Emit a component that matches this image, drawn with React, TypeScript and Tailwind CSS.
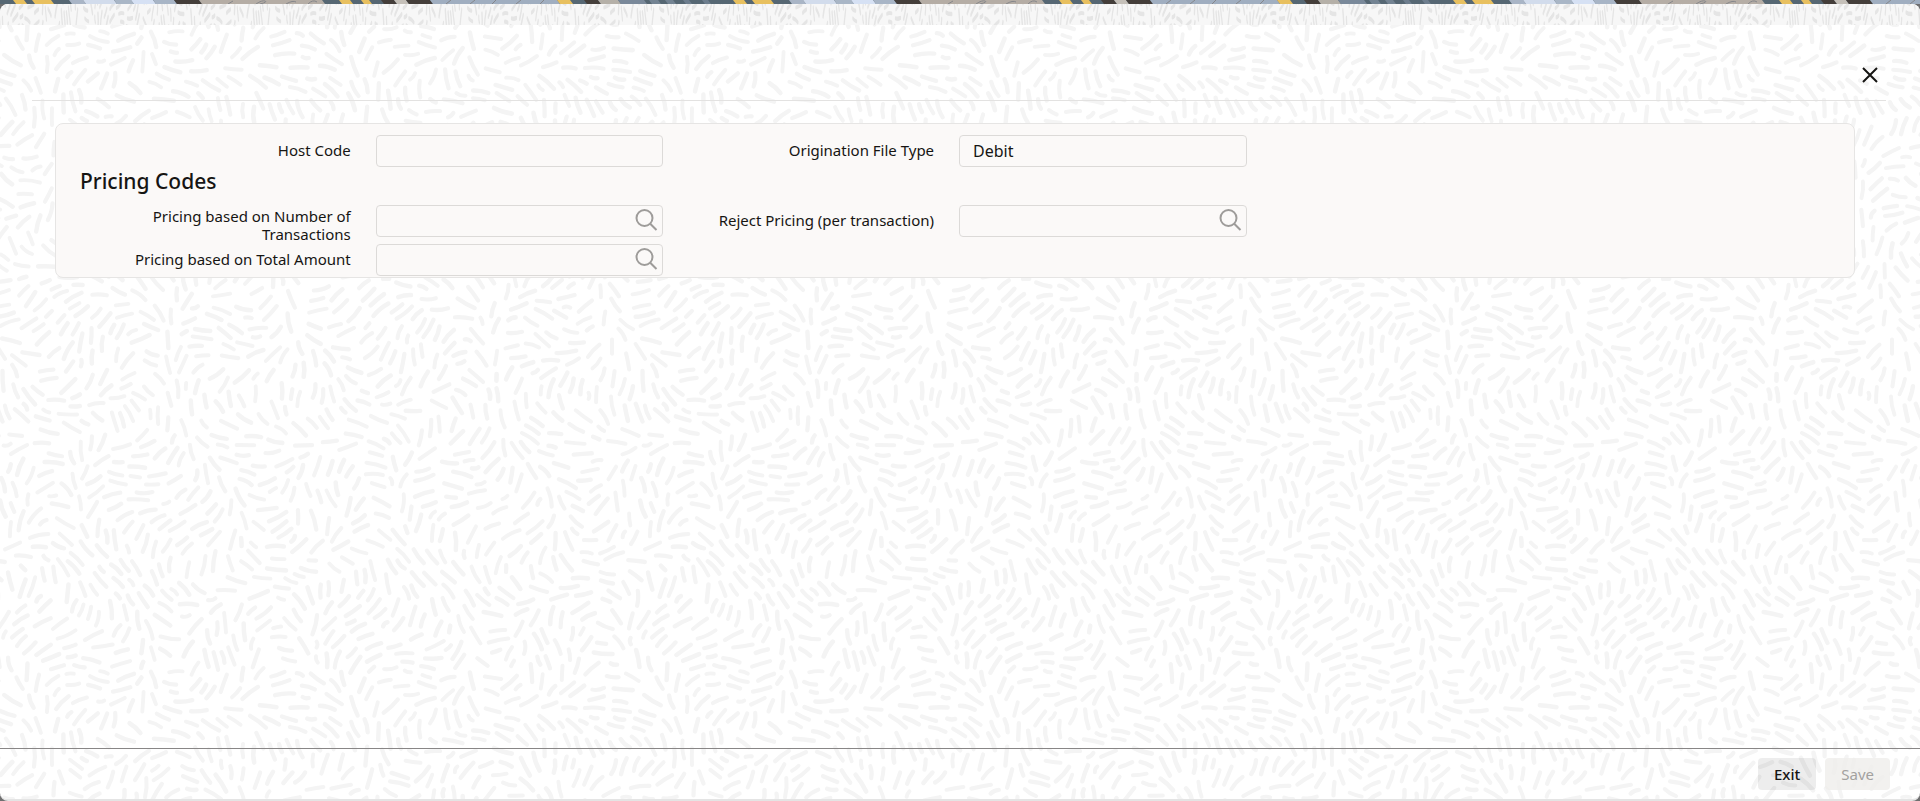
import { useId, type ReactNode } from "react";

type Dash = { d: string; w: number };

const TILE = 640;

function makeDashes(): Dash[] {
  let seed = 20451;
  const rand = () => {
    seed = (seed * 1664525 + 1013904223) % 4294967296;
    return seed / 4294967296;
  };
  const k = (Math.PI * 2) / TILE;
  const angle = (x: number, y: number) =>
    0.9 +
    1.4 * Math.sin(k * (2 * x + y)) +
    1.1 * Math.cos(k * (3 * y - 2 * x) + 1.1) +
    0.5 * Math.sin(k * (4 * x + 3 * y) + 2.3);
  const cell = 16;
  const n = TILE / cell;
  const grid: number[][][] = Array.from({ length: n * n }, () => []);
  const wrap = (v: number) => ((v % n) + n) % n;
  const near = (x: number, y: number, min: number) => {
    const cx = Math.floor(x / cell);
    const cy = Math.floor(y / cell);
    for (let i = -1; i <= 1; i++) {
      for (let j = -1; j <= 1; j++) {
        for (const p of grid[wrap(cy + j) * n + wrap(cx + i)]) {
          let dx = Math.abs(p[0] - x) % TILE;
          let dy = Math.abs(p[1] - y) % TILE;
          dx = Math.min(dx, TILE - dx);
          dy = Math.min(dy, TILE - dy);
          if (dx * dx + dy * dy < min * min) return true;
        }
      }
    }
    return false;
  };
  const out: Dash[] = [];
  for (let t = 0; t < 90000; t++) {
    const x = rand() * TILE;
    const y = rand() * TILE;
    const a = angle(x, y) + (rand() - 0.5) * 0.3;
    const half = (t < 30000 ? 6 : 3) + rand() * 4;
    const bend = (rand() - 0.5) * 4;
    const c = Math.cos(a);
    const s = Math.sin(a);
    const pts = [-1, -0.5, 0, 0.5, 1].map((q) => [x + c * half * q, y + s * half * q]);
    if (pts.some((p) => near(p[0], p[1], 7.6))) continue;
    for (const p of pts) {
      grid[wrap(Math.floor(p[1] / cell)) * n + wrap(Math.floor(p[0] / cell))].push(p);
    }
    const w = 3.8 + rand() * 0.8;
    for (const ox of [-TILE, 0, TILE]) {
      for (const oy of [-TILE, 0, TILE]) {
        const X = x + ox;
        const Y = y + oy;
        if (X < -14 || Y < -14 || X > TILE + 14 || Y > TILE + 14) continue;
        const f = (v: number) => v.toFixed(1);
        out.push({
          d: `M${f(X - c * half)} ${f(Y - s * half)}Q${f(X - s * bend)} ${f(Y + c * bend)} ${f(X + c * half)} ${f(Y + s * half)}`,
          w,
        });
      }
    }
  }
  return out;
}

const dashes = makeDashes();

function Texture({ color, transform }: { color: string; transform?: string }) {
  const id = useId();
  return (
    <svg className="pointer-events-none absolute inset-0 h-full w-full" aria-hidden="true">
      <defs>
        <pattern id={id} width={TILE} height={TILE} patternUnits="userSpaceOnUse" patternTransform={transform}>
          <g fill="none" stroke={color} strokeLinecap="round">
            {dashes.map((p, i) => (
              <path key={i} d={p.d} strokeWidth={p.w} />
            ))}
          </g>
        </pattern>
      </defs>
      <rect width="100%" height="100%" fill={`url(#${id})`} />
    </svg>
  );
}

const bands: [number, number, string][] = [
  [14, 11, "#e8c05f"],
  [33, 19, "#e8c05f"],
  [70, 14, "#a9b5c6"],
  [84, 31, "#d2dcec"],
  [115, 17, "#a9b6c6"],
  [132, 22, "#d6e1f4"],
  [154, 21, "#a8b5c6"],
  [175, 25, "#443e3a"],
  [200, 123, "#b5ada5"],
  [340, 11, "#e8c05f"],
  [362, 8, "#e8c05f"],
  [382, 13, "#443e3a"],
  [395, 12, "#c5c0b9"],
  [407, 24, "#443e3a"],
  [431, 127, "#a0aec0"],
  [558, 13, "#e8c05f"],
  [585, 14, "#443e3a"],
  [599, 20, "#b5b0a8"],
  [619, 26, "#7a899a"],
  [650, 9, "#738392"],
  [666, 8, "#738392"],
  [684, 6, "#6e7e8e"],
  [703, 6, "#6e7e8e"],
];

function Ribbon() {
  return (
    <svg className="block h-1 w-full shrink-0" aria-hidden="true">
      <defs>
        <pattern id="ribbon" width="720" height="4" patternUnits="userSpaceOnUse">
          <rect width="720" height="4" fill="#566773" />
          {bands.map(([x, w, c]) => (
            <path key={x} d={`M${x - 1} 0h${w}l3 4h${-w}z`} fill={c} />
          ))}
          <path
            d="M228 4l5-3M256 4q6-4 9-3t-5 3M286 4q7-4 10-2M308 4q5-5 9-2M446 4l5-4M470 4l5-4M492 4l4-4M516 4l5-4M540 4l4-4"
            stroke="#85868a"
            fill="none"
          />
        </pattern>
      </defs>
      <rect width="100%" height="4" fill="url(#ribbon)" />
    </svg>
  );
}

function SearchIcon() {
  return (
    <svg className="h-6 w-6" viewBox="0 0 24 24" fill="none" stroke="#9e9c9a" strokeWidth="2" aria-hidden="true">
      <circle cx="10.500" cy="9" r="8" />
      <path d="M16.200 14.700L22.500 21" />
    </svg>
  );
}

function Field({ id, label, value, lookup, tall }: { id: string; label: ReactNode; value?: string; lookup?: boolean; tall?: boolean }) {
  return (
    <div className="flex h-8 items-start">
      <label
        htmlFor={id}
        className={`flex-1 pr-[25px] text-right text-[15px] leading-[18px] text-[#161513] ${tall ? "pt-[2px]" : "pt-[6px]"}`}
      >
        {label}
      </label>
      <div className="flex h-8 w-[49.3%] items-center rounded-[4px] border border-[#dcdad8] bg-[#fbf9f8]">
        <input
          id={id}
          defaultValue={value}
          className="h-full min-w-0 flex-1 bg-transparent px-[13px] text-base text-[#161513] outline-none"
        />
        {lookup && (
          <button type="button" aria-label="Search" className="mr-1 flex h-6 w-6 items-center justify-center">
            <SearchIcon />
          </button>
        )}
      </div>
    </div>
  );
}

export default function App() {
  return (
    <div className="flex min-h-screen flex-col bg-[#6f6f70] font-['Noto_Sans','Open_Sans',sans-serif]">
      <Ribbon />
      <div className="relative flex flex-1 flex-col overflow-hidden rounded-lg border-b-2 border-[#e4e4e4] bg-white">
        <Texture color="#f4f4f4" />
        <div className="relative h-[21px] shrink-0 overflow-hidden bg-[#f7f7f7]">
          <Texture color="#e5e5e5" transform="scale(0.3 1)" />
        </div>
        <header className="relative ml-8 mr-[34px] flex h-[76px] items-end justify-end border-b border-[#e3e2e1] pb-[13px] pr-1">
          <button type="button" aria-label="Close" className="flex h-6 w-6 items-center justify-center">
            <svg className="h-4 w-4" viewBox="0 0 16 16" stroke="#161513" strokeWidth="2" aria-hidden="true">
              <path d="M1 1L15 15M15 1L1 15" />
            </svg>
          </button>
        </header>
        <main className="relative flex-1 pl-[55px] pr-[65px] pt-[22px]">
          <form className="rounded-lg border border-[#e6e5e4] bg-[#fbf9f8] px-6 pt-[11px]">
            <div className="grid grid-cols-3">
              <Field id="host" label="Host Code" />
              <Field id="file-type" label="Origination File Type" value="Debit" />
            </div>
            <h2 className="h-[38px] text-[21px] font-medium leading-[28px] text-[#161513]">Pricing Codes</h2>
            <div className="grid grid-cols-3 gap-y-[7px] pb-px">
              <Field id="count" label="Pricing based on Number of Transactions" lookup tall />
              <Field id="reject" label="Reject Pricing (per transaction)" lookup />
              <div />
              <Field id="total" label="Pricing based on Total Amount" lookup />
            </div>
          </form>
        </main>
        <footer className="relative flex h-[51px] items-center justify-end gap-[9px] border-t border-[#888686] pr-[30px]">
          <button type="button" className="h-8 rounded-[4px] bg-black/7 px-4 text-[15px] font-medium text-[#161513]">
            Exit
          </button>
          <button type="button" disabled className="h-8 rounded-[4px] bg-[#efedeb]/80 px-4 text-[15px] text-[#a3a19f]">
            Save
          </button>
        </footer>
      </div>
    </div>
  );
}
